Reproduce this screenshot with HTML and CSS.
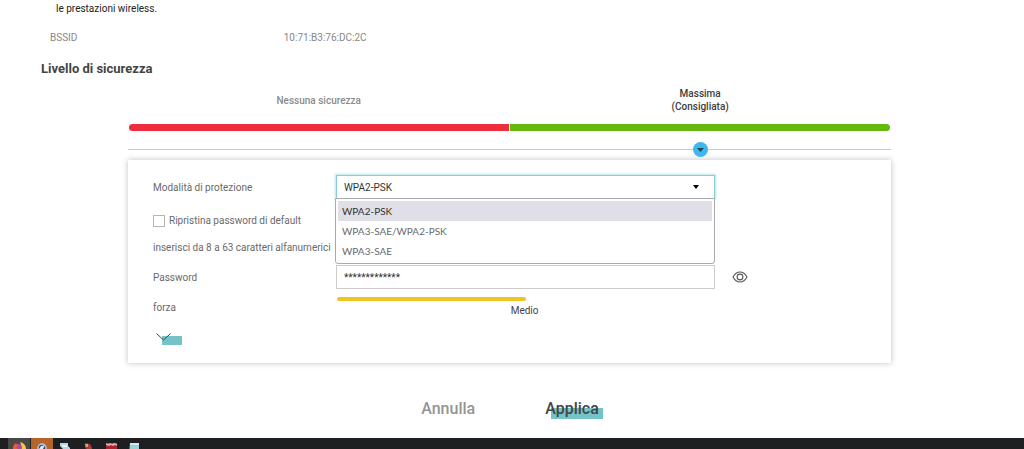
FILE: index.html
```
<!DOCTYPE html>
<html lang="it">
<head>
    <meta charset="UTF-8">
    <meta name="viewport" content="width=device-width, initial-scale=1.0">
    <title>Livello di sicurezza</title>
    <link rel="stylesheet" href="styles.css">
</head>
<body>
    <main class="content">
        <p class="note">le prestazioni wireless.</p>
        <dl class="info">
            <dt>BSSID</dt>
            <dd>10:71:B3:76:DC:2C</dd>
        </dl>
        <h2 class="title">Livello di sicurezza</h2>

        <form class="security">
            <div class="levels">
                <span class="level">Nessuna sicurezza</span>
                <span class="level active">Massima<br>(Consigliata)</span>
            </div>
            <div class="bar">
                <span class="bar-none"></span>
                <span class="bar-max"></span>
            </div>
            <input class="slider" type="range" min="0" max="100" step="0.5" value="75.5" aria-label="Livello di sicurezza">

            <div class="panel">
                <div class="row row-mode">
                    <label for="mode">Modalità di protezione</label>
                    <div class="field">
                        <select id="mode" class="select">
                            <option selected>WPA2-PSK</option>
                            <option>WPA3-SAE/WPA2-PSK</option>
                            <option>WPA3-SAE</option>
                        </select>
                        <ul class="menu" role="listbox" aria-label="Modalità di protezione">
                            <li class="menu-item selected" role="option" aria-selected="true">WPA2-PSK</li>
                            <li class="menu-item" role="option" aria-selected="false">WPA3-SAE/WPA2-PSK</li>
                            <li class="menu-item" role="option" aria-selected="false">WPA3-SAE</li>
                        </ul>
                    </div>
                </div>
                <div class="row-reset">
                    <input id="reset" class="checkbox" type="checkbox">
                    <label for="reset">Ripristina password di default</label>
                </div>
                <p class="hint">inserisci da 8 a 63 caratteri alfanumerici</p>
                <div class="row row-password">
                    <label for="password">Password</label>
                    <input id="password" class="input" type="text" value="*************">
                    <button class="eye" type="button" aria-label="Mostra password">
                        <svg width="16" height="12" viewBox="0 0 16 12" fill="none" stroke="#555" stroke-width="1.1">
                            <path d="M1 6C2.8 2.7 5.2 1 8 1s5.200 1.700 7 5c-1.800 3.300-4.200 5-7 5S2.800 9.300 1 6z"/>
                            <circle cx="8" cy="6" r="2.900"/>
                        </svg>
                    </button>
                </div>
                <div class="row row-strength">
                    <span class="strength-label">forza</span>
                    <div class="strength">
                        <div class="strength-bar"></div>
                        <span class="strength-text">Medio</span>
                    </div>
                </div>
                <button class="more" type="button" aria-label="Mostra altro">
                    <svg width="30" height="14" viewBox="0 0 30 14" fill="none">
                        <rect x="9" y="4" width="20" height="9" fill="#74c4c7"/>
                        <path d="M3.500 1.500l7 6.500 7-6.500" stroke="#444"/>
                    </svg>
                </button>
            </div>
        </form>

        <div class="actions">
            <button class="btn cancel" type="button">Annulla</button>
            <button class="btn apply" type="button">Applica</button>
        </div>
    </main>

    <footer class="taskbar">
        <span class="task edge"></span>
        <button class="task firefox" type="button" aria-label="Firefox">
            <svg width="16" height="16" viewBox="0 0 16 16">
                <circle cx="8" cy="8" r="4" fill="#9a4fae"/>
                <path d="M2 8C2 5 4 4 5 3c0 1 2 2 3 2-3 1-3 3-1 4 3 1 5-1 4-3 0-2-1-2-1-3 3 1 5 3 5 6a6 6 0 0 1-13 0z" fill="#f5572f"/>
                <path d="M9 2c4 1 6 4 6 7h-4c0-3-1-5-2-7z" fill="#ffc637"/>
            </svg>
        </button>
        <button class="task current" type="button" aria-label="Browser">
            <svg width="16" height="16" viewBox="0 0 16 16">
                <circle cx="8" cy="8" r="4" fill="#2d4569" stroke="#b9c7dc" stroke-width="1.500"/>
                <path d="M5 9l2-3 4-1-2 4z" fill="#dfe7f2"/>
            </svg>
        </button>
        <button class="task" type="button" aria-label="Documenti">
            <svg width="16" height="16" viewBox="0 0 16 16">
                <path d="M3 3h8v3l2 2v7H4l2-6-3-3z" fill="#b9d5e5"/>
                <path d="M5 5h5v2H6z" fill="#eef6fa"/>
            </svg>
        </button>
        <button class="task" type="button" aria-label="Strumenti">
            <svg width="16" height="16" viewBox="0 0 16 16">
                <path d="M5 3l5 1 2 4-1 7H8l1-5-4-2z" fill="#a83c2d"/>
                <path d="M5 4h3v3H6z" fill="#d89e86"/>
            </svg>
        </button>
        <button class="task" type="button" aria-label="Gioco">
            <svg width="16" height="16" viewBox="0 0 16 16">
                <path d="M3 3h11v12H3z" fill="#b2202c"/>
                <path d="M3 3l2 1 2-1 2 1 2-1 3 1v2l-2-1-2 1-2-1-2 1-3-1z" fill="#d9b0ac"/>
            </svg>
        </button>
        <button class="task" type="button" aria-label="Blocco note">
            <svg width="16" height="16" viewBox="0 0 16 16">
                <path d="M4 3h9v12H3z" fill="#9bd0d5"/>
                <path d="M4 3h9v2H4z" fill="#d6e8e9"/>
            </svg>
        </button>
    </footer>
</body>
</html>
```
FILE: styles.css
```
* {
    box-sizing: border-box;
}
body {
    font-family: Roboto, sans-serif;
    font-size: 10px;
    line-height: 14px;
    color: #6a6a6a;
    background-color: #fff;
    display: flex;
    flex-direction: column;
    min-height: 100vh;
    margin: 0;
}
button, input, select {
    font-family: inherit;
    font-size: inherit;
    margin: 0;
}
button {
    background: none;
    border: none;
    padding: 0;
    cursor: pointer;
}
.content {
    flex: 1;
}
.note {
    margin: 0 0 15px 56px;
    padding-top: 2px;
    color: #222;
}
.info {
    display: flex;
    margin: 0 0 0 50px;
    color: #888;
}
.info dt {
    width: 24%;
}
.info dd {
    margin: 0;
}
.title {
    margin: 14px 0 0 41px;
    font-size: 13px;
    line-height: 20px;
    font-weight: 700;
    color: #444;
}
.security {
    margin: 8px 13% 0 12.5%;
}
.levels {
    display: grid;
    grid-template-columns: 1fr 1fr;
    align-items: center;
    text-align: center;
    line-height: 13px;
}
.level {
    font-weight: 500;
    color: #8c8c8c;
}
.level.active {
    color: #3c3c3c;
}
.bar {
    display: flex;
    gap: 1px;
    height: 7px;
    margin: 11px 1px 0;
}
.bar span {
    flex: 1;
}
.bar-none {
    background-color: #ee2e3e;
    border-radius: 4px 0 0 4px;
}
.bar-max {
    background-color: #67b80e;
    border-radius: 0 4px 4px 0;
}
.slider {
    -webkit-appearance: none;
    appearance: none;
    display: block;
    width: 100%;
    height: 15px;
    margin: 11px 0 3px;
    background: linear-gradient(#ccc, #ccc) center / 100% 1px no-repeat;
}
.slider::-webkit-slider-thumb {
    -webkit-appearance: none;
    width: 15px;
    height: 15px;
    border-radius: 50%;
    background: #3cb8ec url("data:image/svg+xml,%3Csvg xmlns='http://www.w3.org/2000/svg' width='7' height='4'%3E%3Cpath d='M0 0h7L3.5 4z' fill='%23264656'/%3E%3C/svg%3E") center no-repeat;
}
.panel {
    padding: 15px 25px 17px;
    box-shadow: 0 0 6px rgba(0, 0, 0, 0.25);
}
.row {
    display: grid;
    grid-template-columns: 183px minmax(0, 379px) auto;
    align-items: center;
}
.row label {
    padding-top: 2px;
}
.field {
    position: relative;
}
.select, .input {
    display: block;
    width: 100%;
    height: 24px;
    padding: 0 7px;
    border: 1px solid #ccc;
    border-radius: 0;
    color: #333;
    background-color: #fff;
}
.select {
    -webkit-appearance: none;
    appearance: none;
    border-color: #8accde;
    box-shadow: 0 0 2px 1px #b9e3ee;
    background: #fff url("data:image/svg+xml,%3Csvg xmlns='http://www.w3.org/2000/svg' width='6' height='4'%3E%3Cpath d='M0 0h6L3 4z'/%3E%3C/svg%3E") right 15px center no-repeat;
}
.menu {
    position: absolute;
    z-index: 1;
    top: 100%;
    left: -1px;
    right: 0;
    margin: 0;
    margin-top: -1px;
    padding: 2px;
    list-style: none;
    font-family: Lato, sans-serif;
    line-height: 20px;
    background-color: #fff;
    border: 1px solid #aaa;
    border-radius: 0 0 3px 3px;
}
.menu-item {
    padding: 0 4px;
}
.menu-item.selected {
    color: #333;
    background-color: #e0dee6;
}
.row-reset {
    display: flex;
    align-items: center;
    gap: 4px;
    margin-top: 14px;
}
.row-reset label {
    padding-top: 1px;
}
.checkbox {
    -webkit-appearance: none;
    appearance: none;
    width: 12px;
    height: 12px;
    border: 1px solid #b5b5b5;
}
.hint {
    margin: 13px 0 10px;
}
.eye {
    display: flex;
    margin-left: 17px;
    justify-self: start;
}
.row-strength {
    align-items: start;
    margin-top: 8px;
}
.strength-label {
    padding-top: 4px;
}
.strength {
    width: 50%;
    padding-left: 1px;
}
.strength-bar {
    height: 4px;
    border-radius: 2px;
    background-color: #f0c420;
}
.strength-text {
    display: block;
    margin-top: 3px;
    margin-right: -13px;
    text-align: right;
    color: #444;
}
.more {
    display: flex;
    margin-top: 14px;
}
.actions {
    display: flex;
    justify-content: center;
    gap: 70px;
    margin: 36px 0 8px;
}
.btn {
    font-size: 16px;
    line-height: 20px;
    font-weight: 500;
}
.cancel {
    color: #949494;
}
.apply {
    color: #444;
    background: linear-gradient(#74c4c7, #74c4c7) right bottom / 52px 11px no-repeat;
    padding-right: 4px;
}
.taskbar {
    display: flex;
    gap: 1px;
    height: 11px;
    overflow: hidden;
    background-color: #1d1f20;
}
.task {
    display: flex;
    justify-content: center;
    width: 22px;
    height: 22px;
    padding-top: 2px;
}
.task.edge {
    width: 7px;
}
.task.firefox {
    background-color: #484848;
}
.task.current {
    background-color: #b5652a;
}
```
